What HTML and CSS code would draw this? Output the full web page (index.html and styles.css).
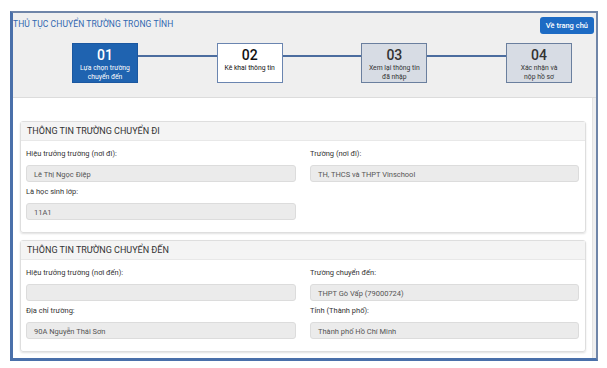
FILE: index.html
```html
<!DOCTYPE html>
<html lang="vi">
<head>
    <meta charset="UTF-8">
    <meta name="viewport" content="width=device-width, initial-scale=1.0">
    <title>Thủ tục chuyển trường trong tỉnh</title>
    <link rel="stylesheet" href="styles.css">
</head>
<body>
    <div class="frame">
        <!-- Header with steps -->
        <div class="header">
            <div class="header-top">
                <div class="page-title">THỦ TỤC CHUYỂN TRƯỜNG TRONG TỈNH</div>
                <button class="home-btn">Về trang chủ</button>
            </div>
            <div class="steps">
                <div class="step active">
                    <div class="step-num">01</div>
                    <div class="step-text">Lựa chọn trường<br>chuyển đến</div>
                </div>
                <div class="step-line"></div>
                <div class="step current">
                    <div class="step-num">02</div>
                    <div class="step-text">Kê khai thông tin</div>
                </div>
                <div class="step-line"></div>
                <div class="step">
                    <div class="step-num">03</div>
                    <div class="step-text">Xem lại thông tin<br>đã nhập</div>
                </div>
                <div class="step-line"></div>
                <div class="step">
                    <div class="step-num">04</div>
                    <div class="step-text">Xác nhận và<br>nộp hồ sơ</div>
                </div>
            </div>
        </div>

        <!-- Content -->
        <div class="content">
            <div class="card">
                <div class="card-title">THÔNG TIN TRƯỜNG CHUYỂN ĐI</div>
                <div class="card-body">
                    <div class="field">
                        <label>Hiệu trưởng trường (nơi đi):</label>
                        <div class="input">Lê Thị Ngọc Điệp</div>
                    </div>
                    <div class="field">
                        <label>Trường (nơi đi):</label>
                        <div class="input">TH, THCS và THPT Vinschool</div>
                    </div>
                    <div class="field">
                        <label>Là học sinh lớp:</label>
                        <div class="input">11A1</div>
                    </div>
                </div>
            </div>

            <div class="card">
                <div class="card-title">THÔNG TIN TRƯỜNG CHUYỂN ĐẾN</div>
                <div class="card-body">
                    <div class="field">
                        <label>Hiệu trưởng trường (nơi đến):</label>
                        <div class="input"></div>
                    </div>
                    <div class="field">
                        <label>Trường chuyển đến:</label>
                        <div class="input">THPT Gò Vấp (79000724)</div>
                    </div>
                    <div class="field">
                        <label>Địa chỉ trường:</label>
                        <div class="input">90A Nguyễn Thái Sơn</div>
                    </div>
                    <div class="field">
                        <label>Tỉnh (Thành phố):</label>
                        <div class="input">Thành phố Hồ Chí Minh</div>
                    </div>
                </div>
            </div>
        </div>
    </div>
</body>
</html>
```

FILE: styles.css
```css
/* Page */
body {
    margin: 0;
    padding: 11px 9px 0 10px;
    font-family: Roboto, "Noto Sans", sans-serif;
    background-color: #fff;
    color: #333;
}

/* Outer frame */
.frame {
    height: 345px;
    overflow: hidden;
    background-color: #efefef;
    border: 2px solid #6f85a8;
    border-left: 3px solid #4a70aa;
    border-bottom: 3px solid #4a70aa;
    display: flex;
    flex-direction: column;
}

/* Header */
.header {
    flex-shrink: 0;
    padding: 4px 2px 0 0;
    height: 80px;
    border-bottom: 1px solid #dcdcdc;
}

.header-top {
    display: flex;
    justify-content: space-between;
    align-items: flex-start;
}

.page-title {
    margin-top: 2px;
    font-size: 8.5px;
    color: #2f67b0;
    letter-spacing: 0.1px;
}

.home-btn {
    height: 17px;
    padding: 0 6px;
    border: none;
    border-radius: 3px;
    background-color: #1d6bc4;
    color: #fff;
    font-family: inherit;
    font-size: 7.5px;
    font-weight: 500;
}

/* Steps */
.steps {
    display: flex;
    align-items: flex-start;
    margin: 9px 22px 0 59px;
}

.step {
    width: 66px;
    height: 40px;
    box-sizing: border-box;
    border: 1px solid #6a7f9e;
    background-color: #d7dce4;
    text-align: center;
    color: #333;
}

.step.active {
    background-color: #1f63b0;
    border-color: #1a57a0;
    color: #fff;
}

.step.current {
    background-color: #fff;
    border-color: #6a85b0;
    color: #111;
}

.step-num {
    font-size: 14px;
    font-weight: 500;
    line-height: 15px;
    margin-top: 4px;
}

.step-text {
    font-size: 6.8px;
    line-height: 8.5px;
    margin-top: 1px;
}

.step-line {
    flex: 1;
    height: 2px;
    margin-top: 12px;
    background-color: #4c6d9f;
}

/* Content */
.content {
    flex: 1;
    background-color: #fff;
    margin-right: 3px;
    border-right: 1px solid #e3e3e3;
    padding: 23px 6px 0 7px;
}

.card {
    border: 1px solid #dedede;
    border-radius: 3px;
    box-shadow: 0 1px 2px rgba(0, 0, 0, 0.12);
    margin-bottom: 7px;
}

.card-title {
    height: 18px;
    line-height: 18px;
    padding-left: 6px;
    background-color: #f4f4f4;
    border-bottom: 1px solid #e8e8e8;
    font-size: 9px;
    color: #333;
}

.card-body {
    display: grid;
    grid-template-columns: 270px 269px;
    column-gap: 14px;
    row-gap: 4px;
    padding: 7px 8px 12px 5px;
}

.field label {
    display: block;
    height: 12px;
    line-height: 12px;
    font-size: 7.5px;
    color: #333;
    margin-bottom: 5px;
}

.input {
    height: 17px;
    line-height: 17px;
    box-sizing: border-box;
    padding-left: 7px;
    background-color: #ebebeb;
    border: 1px solid #dcdcdc;
    border-radius: 3px;
    font-size: 7.5px;
    color: #555;
}
```
